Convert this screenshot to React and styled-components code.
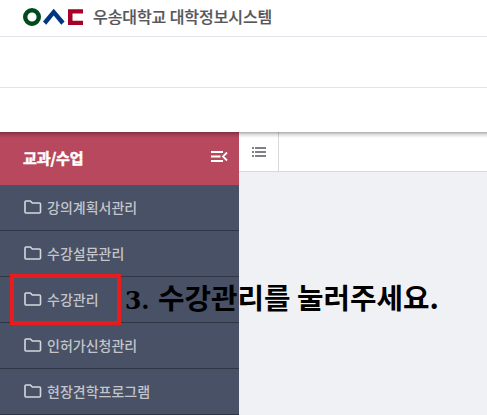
import React from "react";
import styled, { createGlobalStyle } from "styled-components";

const Global = createGlobalStyle`
  * { box-sizing: border-box; }
  body { margin: 0; overflow: hidden; font-family: "Noto Sans CJK KR", sans-serif; }
`;

const Page = styled.div`
  position: relative;
  display: flex;
  flex-direction: column;
  width: 487px;
  height: 415px;
  overflow: hidden;
  background: #fff;
`;

const Header = styled.header`
  display: flex;
  align-items: center;
  gap: 10px;
  height: 37px;
  padding: 0 0 2px 23px;
  border-bottom: 1px solid #e3e3e9;
`;

const Logo = styled.svg`
  display: block;
  width: 60px;
  height: 18px;
`;

const SiteName = styled.h1`
  margin: -2px 0 0;
  font-size: 16px;
  font-weight: 500;
  line-height: 24px;
  letter-spacing: -0.08px;
  color: #55565a;
  -webkit-text-stroke: 0.2px #55565a;
  white-space: nowrap;
`;

const MenuBar = styled.div`
  height: 51px;
  border-bottom: 1px solid #e3e3e9;
`;

const SubBar = styled.div`
  height: 44px;
`;

const Body = styled.div`
  position: relative;
  display: flex;
  flex: 1;
  background: #f0f1f4;
  &::before {
    content: "";
    position: absolute;
    inset: 0 0 auto 0;
    height: 6px;
    background: linear-gradient(rgba(0, 0, 0, 0.32), rgba(0, 0, 0, 0.1) 50%, rgba(0, 0, 0, 0));
  }
`;

const Sidebar = styled.aside`
  width: 239px;
  background: #485165;
`;

const SideHead = styled.div`
  display: flex;
  align-items: center;
  justify-content: space-between;
  height: 53px;
  padding: 0 11px 4px 23px;
  background: #b7485e;
  color: #fff;
`;

const SideTitle = styled.h2`
  margin: 3px 0 0;
  font-size: 15px;
  font-weight: 700;
  line-height: 22px;
  letter-spacing: -0.1px;
  -webkit-text-stroke: 0.5px #fff;
`;

const Icon = styled.svg`
  display: block;
  flex: none;
  width: ${(p) => p.$w}px;
  height: ${(p) => p.$h}px;
`;

const Item = styled.div`
  display: flex;
  align-items: center;
  gap: 5px;
  height: 46px;
  padding: 0 0 2px 24px;
  border-bottom: 1px solid #303645;
  color: #c3c5cb;
  font-size: 14px;
  font-weight: 500;
  line-height: 20px;
`;

const Main = styled.main`
  flex: 1;
`;

const Tabs = styled.div`
  display: flex;
  height: 40px;
  background: #fff;
  border-bottom: 1px solid #d9d9db;
`;

const ListTab = styled.div`
  display: flex;
  align-items: center;
  justify-content: center;
  width: 40px;
  padding: 1px 0 0 1px;
  border-right: 1px solid #d9d9db;
`;

const Highlight = styled.div`
  position: absolute;
  left: 10px;
  top: 274px;
  width: 111px;
  height: 51px;
  border: 4px solid #e81c1c;
`;

const Note = styled.div`
  position: absolute;
  left: 125px;
  top: 276px;
  display: flex;
  align-items: baseline;
  font-size: 28.8px;
  font-weight: 700;
  line-height: 42px;
  color: #000;
  white-space: nowrap;
`;

const Step = styled.span`
  width: 33px;
  font-family: "DejaVu Serif", serif;
  font-size: 23.5px;
  font-weight: 700;
`;

const items = ["강의계획서관리", "수강설문관리", "수강관리", "인허가신청관리", "현장견학프로그램"];

const Folder = () => (
  <Icon $w={18} $h={14} viewBox="0 0 18 14">
    <path
      d="M1 2Q1 1 2 1H6.4L8.3 3H15.5Q16.5 3 16.5 4V12Q16.5 13 15.5 13H2Q1 13 1 12Z"
      fill="none"
      stroke="#d5d7dc"
      strokeWidth="1.6"
      strokeLinejoin="round"
    />
  </Icon>
);

export default function App() {
  return (
    <Page>
      <Global />
      <Header>
        <Logo viewBox="0 0 60 18">
          <circle cx="9" cy="9" r="6.8" fill="none" stroke="#004b1c" strokeWidth="4.4" />
          <path d="M20 13.5L30.7 0.8L41.6 13.5L38.3 16.7L30.7 7.6L23.2 16.7Z" fill="#003680" />
          <path d="M60 1.2H45V17H60V12.8H49.5V5.4H60Z" fill="#a90027" />
        </Logo>
        <SiteName>우송대학교 대학정보시스템</SiteName>
      </Header>
      <MenuBar />
      <SubBar />
      <Body>
        <Sidebar>
          <SideHead>
            <SideTitle>교과/수업</SideTitle>
            <Icon $w={17} $h={11} viewBox="0 0 17 11">
              <path
                d="M0 1H12M0 5.5H9.5M0 10H12M16 1.5L12 5.5L16 9.5"
                fill="none"
                stroke="#fff"
                strokeWidth="1.8"
              />
            </Icon>
          </SideHead>
          {items.map((label) => (
            <Item key={label}>
              <Folder />
              <span>{label}</span>
            </Item>
          ))}
        </Sidebar>
        <Main>
          <Tabs>
            <ListTab>
              <Icon $w={14} $h={10} viewBox="0 0 14 10">
                <path d="M0 1H2M3 1H14M0 5H2M3 5H14M0 9H2M3 9H14" stroke="#808087" strokeWidth="2" />
              </Icon>
            </ListTab>
          </Tabs>
        </Main>
      </Body>
      <Highlight />
      <Note>
        <Step>3.</Step>
        <span>수강관리를 눌러주세요.</span>
      </Note>
    </Page>
  );
}
